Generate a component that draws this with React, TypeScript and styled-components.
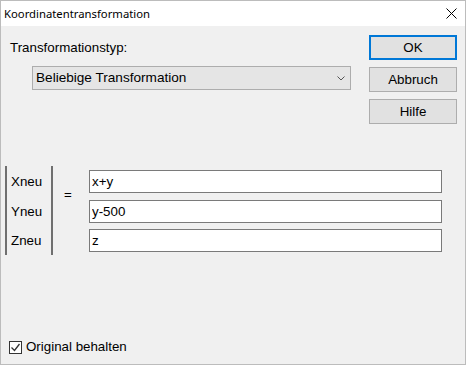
import React from 'react';
import styled, { createGlobalStyle } from 'styled-components';

const GlobalStyle = createGlobalStyle`
  html, body {
    margin: 0;
    padding: 0;
    background: #ffffff;
  }
  * {
    box-sizing: border-box;
  }
`;

const Window = styled.div`
  width: 466px;
  height: 365px;
  border: 1px solid #bcbcbc;
  background: #f0f0f0;
  display: flex;
  flex-direction: column;
  font-family: 'Liberation Sans', Arial, sans-serif;
  font-size: 13.33px;
  color: #000;
`;

const TitleBar = styled.div`
  height: 25px;
  background: #ffffff;
  display: flex;
  align-items: center;
  justify-content: space-between;
  padding-left: 3px;
`;

const Title = styled.span`
  font-family: 'Noto Sans', 'Open Sans', sans-serif;
  font-size: 11.3px;
  line-height: 16px;
`;

const CloseBox = styled.div`
  width: 28px;
  height: 25px;
  display: flex;
  align-items: center;
  justify-content: center;
`;

const Body = styled.div`
  flex: 1;
  display: flex;
  flex-direction: column;
`;

const TopRow = styled.div`
  display: flex;
  justify-content: space-between;
  padding: 9px 8px 0 9px;
`;

const LeftCol = styled.div`
  display: flex;
  flex-direction: column;
`;

const Label = styled.div`
  margin-top: 5px;
  line-height: 16px;
`;

const Combo = styled.div`
  margin-top: 10px;
  margin-left: 22px;
  width: 319px;
  height: 24px;
  border: 1px solid #adadad;
  background: #e5e5e5;
  display: flex;
  align-items: center;
  justify-content: space-between;
  padding: 0 5px 0 3px;
  line-height: 16px;
  font-size: 13.6px;
`;

const ButtonCol = styled.div`
  display: flex;
  flex-direction: column;
  gap: 7px;
`;

const Button = styled.button<{ $default?: boolean }>`
  width: 88px;
  height: 25px;
  margin: 0;
  padding: 0;
  font: inherit;
  color: #000;
  background: #e1e1e1;
  border: ${(p) => (p.$default ? '2px solid #0078d7' : '1px solid #adadad')};
  display: flex;
  align-items: center;
  justify-content: center;
`;

const Formula = styled.div`
  margin-top: 42px;
  padding-left: 4px;
  display: flex;
  align-items: stretch;
`;

const Bar = styled.div`
  width: 2px;
  background: #6f6f6f;
`;

const LabelCol = styled.div`
  width: 44px;
  padding: 4px 0 3px 4px;
  display: flex;
  flex-direction: column;
  gap: 6.5px;
`;

const VarLabel = styled.div`
  height: 23px;
  display: flex;
  align-items: center;
`;

const EqualsCol = styled.div`
  width: 36px;
  padding: 21px 0 0 11px;
  line-height: 16px;
`;

const InputCol = styled.div`
  padding: 4px 0 3px;
  display: flex;
  flex-direction: column;
  gap: 6.5px;
`;

const Field = styled.input`
  width: 353px;
  height: 23px;
  margin: 0;
  border: 1px solid #7a7a7a;
  background: #fff;
  padding: 0 2px;
  font: inherit;
  color: #000;
  outline: none;
`;

const CheckRow = styled.label`
  margin-top: auto;
  padding: 0 0 9px 8px;
  display: flex;
  align-items: center;
  height: 25px;
  line-height: 16px;
`;

const CheckBox = styled.span`
  width: 13px;
  height: 13px;
  border: 1px solid #333;
  background: #fff;
  display: flex;
  align-items: center;
  justify-content: center;
  margin-right: 4px;
`;

export default function App() {
  return (
    <>
      <GlobalStyle />
      <Window>
        <TitleBar>
          <Title>Koordinatentransformation</Title>
          <CloseBox>
            <svg width="11" height="11" viewBox="0 0 11 11">
              <path d="M0.5 0.5 L10.5 10.5 M10.5 0.5 L0.5 10.5" stroke="#000" strokeWidth="1" />
            </svg>
          </CloseBox>
        </TitleBar>
        <Body>
          <TopRow>
            <LeftCol>
              <Label>Transformationstyp:</Label>
              <Combo>
                <span>Beliebige Transformation</span>
                <svg width="8" height="5" viewBox="0 0 8 5">
                  <path d="M0.5 0.5 L4 4 L7.5 0.5" stroke="#555" strokeWidth="1" fill="none" />
                </svg>
              </Combo>
            </LeftCol>
            <ButtonCol>
              <Button $default>OK</Button>
              <Button>Abbruch</Button>
              <Button>Hilfe</Button>
            </ButtonCol>
          </TopRow>
          <Formula>
            <Bar />
            <LabelCol>
              <VarLabel>Xneu</VarLabel>
              <VarLabel>Yneu</VarLabel>
              <VarLabel>Zneu</VarLabel>
            </LabelCol>
            <Bar />
            <EqualsCol>=</EqualsCol>
            <InputCol>
              <Field defaultValue="x+y" />
              <Field defaultValue="y-500" />
              <Field defaultValue="z" />
            </InputCol>
          </Formula>
          <CheckRow>
            <CheckBox>
              <svg width="11" height="11" viewBox="0 0 11 11">
                <path d="M1.5 5.5 L4.5 8.5 L9.5 2" stroke="#333" strokeWidth="1.3" fill="none" />
              </svg>
            </CheckBox>
            Original behalten
          </CheckRow>
        </Body>
      </Window>
    </>
  );
}
